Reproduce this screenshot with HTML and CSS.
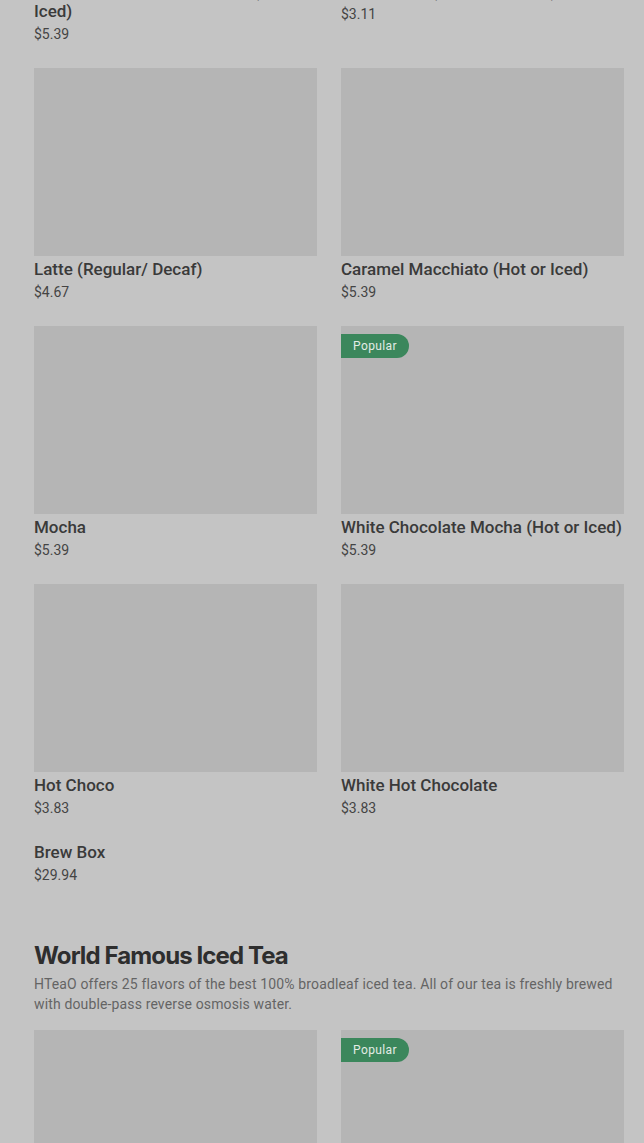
FILE: index.html
```html
<!DOCTYPE html>
<html lang="en">
<head>
<meta charset="utf-8">
<title>Menu</title>
<link rel="stylesheet" href="styles.css">
</head>
<body>
<main class="menu">
  <section class="section coffee">
    <div class="grid">
      <article class="card">
        <div class="thumb"></div>
        <h3 class="name">Salted Caramel Mocha Latte (Hot or Iced)</h3>
        <div class="price">$5.39</div>
      </article>
      <article class="card">
        <div class="thumb"></div>
        <h3 class="name">Drip Coffee (Regular/ Decaf)</h3>
        <div class="price">$3.11</div>
      </article>
      <article class="card">
        <div class="thumb"></div>
        <h3 class="name">Latte (Regular/ Decaf)</h3>
        <div class="price">$4.67</div>
      </article>
      <article class="card">
        <div class="thumb"></div>
        <h3 class="name">Caramel Macchiato (Hot or Iced)</h3>
        <div class="price">$5.39</div>
      </article>
      <article class="card">
        <div class="thumb"></div>
        <h3 class="name">Mocha</h3>
        <div class="price">$5.39</div>
      </article>
      <article class="card">
        <div class="thumb"><span class="badge">Popular</span></div>
        <h3 class="name">White Chocolate Mocha (Hot or Iced)</h3>
        <div class="price">$5.39</div>
      </article>
      <article class="card">
        <div class="thumb"></div>
        <h3 class="name">Hot Choco</h3>
        <div class="price">$3.83</div>
      </article>
      <article class="card">
        <div class="thumb"></div>
        <h3 class="name">White Hot Chocolate</h3>
        <div class="price">$3.83</div>
      </article>
      <article class="card no-thumb">
        <h3 class="name">Brew Box</h3>
        <div class="price">$29.94</div>
      </article>
    </div>
  </section>
  <section class="section tea">
    <h2 class="section-title">World Famous Iced Tea</h2>
    <p class="section-desc">HTeaO offers 25 flavors of the best 100% broadleaf iced tea. All of our tea is freshly brewed with double-pass reverse osmosis water.</p>
    <div class="grid">
      <article class="card">
        <div class="thumb"></div>
        <h3 class="name">Sweet Tea</h3>
        <div class="price">$2.49</div>
      </article>
      <article class="card">
        <div class="thumb"><span class="badge">Popular</span></div>
        <h3 class="name">Unsweet Tea</h3>
        <div class="price">$2.49</div>
      </article>
    </div>
  </section>
</main>
</body>
</html>
```
FILE: styles.css
```css
* { box-sizing: border-box; }
html, body {
  margin: 0;
  padding: 0;
  background: #c4c4c4;
}
body {
  font-family: Roboto, "Liberation Sans", Arial, sans-serif;
  color: #333333;
  overflow: hidden;
}
.menu {
  padding: 0 20px 0 34px;
}
.coffee {
  margin-top: -210px;
}
.grid {
  display: grid;
  grid-template-columns: 283px 283px;
  column-gap: 24px;
  row-gap: 24px;
}
.card {
  display: flex;
  flex-direction: column;
}
.thumb {
  position: relative;
  height: 188px;
  background: #b5b5b5;
}
.name {
  margin: 3px 0 0;
  font-size: 17px;
  line-height: 20px;
  font-weight: 500;
  color: #3a3a3a;
}
.no-thumb .name {
  margin-top: 0;
}
.price {
  margin-top: 3px;
  font-size: 14px;
  line-height: 20px;
  color: #444444;
}
.badge {
  position: absolute;
  top: 8px;
  left: 0;
  height: 24px;
  padding: 0 12px;
  background: #3b875c;
  color: #e3ece6;
  font-size: 12px;
  line-height: 24px;
  letter-spacing: 0.4px;
  border-radius: 0 12px 12px 0;
}
.tea {
  margin-top: 55px;
}
.section-title {
  margin: 0 0 2px;
  font-family: Inter, "Liberation Sans", Arial, sans-serif;
  font-size: 24px;
  line-height: 32px;
  font-weight: 700;
  letter-spacing: -0.9px;
  color: #2e2e2e;
}
.section-desc {
  margin: 0 0 16px;
  font-size: 14px;
  line-height: 20px;
  letter-spacing: 0.14px;
  color: #646464;
}
```
